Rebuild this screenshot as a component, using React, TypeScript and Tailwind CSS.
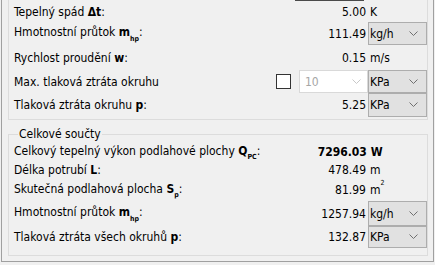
import React from "react";

const Chevron = ({ light = false }: { light?: boolean }) => (
  <svg width="9" height="6" viewBox="0 0 9 6" className="shrink-0">
    <polyline points="0.5,0.5 4.5,4.5 8.5,0.5" fill="none" stroke={light ? "#c8c8c8" : "#707070"} strokeWidth="1" />
  </svg>
);

const Drop = ({ text, h }: { text: string; h: string }) => (
  <div className={`w-[59px] ${h} flex items-center justify-between pl-[1px] pr-[8px] bg-[#e1e1e1] border border-[#adadad]`}>
    <span>{text}</span>
    <Chevron />
  </div>
);

const B = ({ children }: { children: React.ReactNode }) => <b className="font-bold">{children}</b>;
const Sub = ({ children }: { children: React.ReactNode }) => (
  <sub className="font-bold text-[7px] align-[-3px] leading-none">{children}</sub>
);

function Row({
  h,
  label,
  value,
  unit,
}: {
  h: string;
  label: React.ReactNode;
  value: React.ReactNode;
  unit: React.ReactNode;
}) {
  return (
    <div className={`flex items-center ${h}`}>
      <div className="flex-1 pl-[5px] whitespace-nowrap">{label}</div>
      <div className="w-[110px] flex items-center justify-end pr-[2px] whitespace-nowrap">{value}</div>
      <div className="w-[59px] flex items-center">{unit}</div>
    </div>
  );
}

export default function App() {
  return (
    <div className="w-[435px] h-[265px] bg-[#f0f0f0] overflow-hidden text-[12px] leading-none text-[#000] font-['DejaVu_Sans_Condensed','DejaVu_Sans',sans-serif]">
      <div className="ml-[1px] w-[433px] h-[262px] border-l border-r border-b border-[#a0a0a0] px-[6px]">
        {/* upper group */}
        <div className="relative h-[120px] w-[420px] border-l border-r border-b border-[#dcdcdc] pt-[2px] pb-[2px]">
          <div className="absolute top-0 left-[286px] w-[69px] h-px bg-[#4a4a4a]" />
          <Row
            h="h-[20px]"
            label={<>Tepelný spád <B>Δt</B>:</>}
            value="5.00"
            unit={<span className="pl-[2px]">K</span>}
          />
          <Row
            h="h-[23px]"
            label={<>Hmotnostní průtok <B>m</B><Sub>hp</Sub>:</>}
            value="111.49"
            unit={<Drop text="kg/h" h="h-[23px]" />}
          />
          <Row
            h="h-[25px]"
            label={<>Rychlost proudění <B>w</B>:</>}
            value="0.15"
            unit={<span className="pl-[2px]">m/s</span>}
          />
          <Row
            h="h-[23px]"
            label={<>Max. tlaková ztráta okruhu</>}
            value={
              <div className="flex items-center">
                <div className="w-[15px] h-[15px] border border-[#333] bg-white mr-[8px]" />
                <div className="w-[69px] h-[23px] bg-white border border-[#d9d9d9] flex items-center justify-between pl-[5px] pr-[6px] -mr-[2px]">
                  <span className="text-[#a6a6a6]">10</span>
                  <Chevron light />
                </div>
              </div>
            }
            unit={<Drop text="KPa" h="h-[23px]" />}
          />
          <Row
            h="h-[24px]"
            label={<>Tlaková ztráta okruhu <B>p</B>:</>}
            value="5.25"
            unit={<Drop text="KPa" h="h-[24px]" />}
          />
        </div>

        {/* lower group */}
        <div className="relative mt-[14px] h-[122px] w-[420px] border border-[#dcdcdc] pt-[8px]">
          <span className="absolute -top-[7px] left-[9px] px-[1px] bg-[#f0f0f0]">Celkové součty</span>
          <Row
            h="h-[18px]"
            label={<>Celkový tepelný výkon podlahové plochy <B>Q</B><Sub>PC</Sub>:</>}
            value={<B>7296.03</B>}
            unit={<span className="pl-[2px] font-bold">W</span>}
          />
          <Row
            h="h-[18px]"
            label={<>Délka potrubí <B>L</B>:</>}
            value="478.49"
            unit={<span className="pl-[2px]">m</span>}
          />
          <Row
            h="h-[22px]"
            label={<>Skutečná podlahová plocha <B>S</B><Sub>p</Sub>:</>}
            value="81.99"
            unit={
              <span className="pl-[2px]">
                m<sup className="text-[7px] align-[6px]">2</sup>
              </span>
            }
          />
          <Row
            h="h-[25px]"
            label={<>Hmotnostní průtok <B>m</B><Sub>hp</Sub>:</>}
            value="1257.94"
            unit={<Drop text="kg/h" h="h-[25px]" />}
          />
          <Row
            h="h-[22px]"
            label={<>Tlaková ztráta všech okruhů <B>p</B>:</>}
            value="132.87"
            unit={<Drop text="KPa" h="h-[22px]" />}
          />
        </div>
      </div>
    </div>
  );
}
